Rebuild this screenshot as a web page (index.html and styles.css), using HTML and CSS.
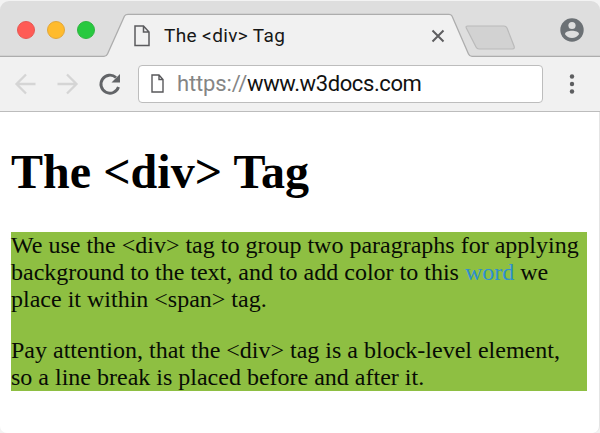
FILE: index.html
```html
<!DOCTYPE html>
<html lang="en">
<head>
<meta charset="utf-8">
<title>The &lt;div&gt; Tag</title>
<link rel="stylesheet" href="styles.css">
</head>
<body>
<div class="window">
  <header class="tabstrip">
    <svg class="tab-shape" width="600" height="57" viewBox="0 0 600 57">
      <path d="M-2 56.300H104Q106.500 56.300 107.500 54L124.500 16Q125.500 14.300 128 14.300H449Q451 14.300 452 16L468.500 54Q469.500 56.300 472 56.300H602V58H-2Z" fill="#f1f1f1" stroke="#adadad" stroke-width="1.300"/>
      <path d="M467.500 26H504Q506 26 507 28L514 46Q515 49 512.500 49H479Q477 49 476 47L466.300 28Q465.500 26 467.500 26Z" fill="#d2d2d2" stroke="#bababa" stroke-width="1.200"/>
    </svg>
    <div class="lights"><i class="light red"></i><i class="light yellow"></i><i class="light green"></i></div>
    <div class="tab">
      <svg width="16" height="22" viewBox="0 0 16 22" fill="none" stroke="#5b5b5e" stroke-width="1.500"><path d="M1 1H9.500L15 7V20.500H1ZM9.500 1V7H15"/></svg>
      <span class="tab-title">The &lt;div&gt; Tag</span>
      <svg class="close" width="14" height="14" viewBox="0 0 14 14" stroke="#5e5e60" stroke-width="2"><path d="M1.500 1.500L12.500 12.500M12.500 1.500L1.500 12.500"/></svg>
    </div>
    <svg class="user" width="24" height="24" viewBox="0 0 24 24"><circle cx="12" cy="12" r="11.700" fill="#6c7175"/><circle cx="12" cy="7.500" r="3.600" fill="#dedede"/><path d="M5 16.200C5 13.500 9 12.700 12 12.700S19 13.500 19 16.200C17.500 18.600 15 20 12 20S6.500 18.600 5 16.200Z" fill="#dedede"/></svg>
  </header>
  <nav class="toolbar">
    <svg class="nav-icons" width="108" height="26" viewBox="0 0 108 26" fill="none">
      <path d="M21.500 13H2.500M12 3.500L2.500 13L12 22.500M43.500 13H62.500M53 3.500L62.500 13L53 22.500" stroke="#d5d5d5" stroke-width="2.300"/>
      <path d="M104.500 16A9 9 0 1 1 102 6.500" stroke="#626467" stroke-width="2.900"/>
      <path d="M106 3V11.500H97.500Z" fill="#626467"/>
    </svg>
    <div class="address">
      <svg width="13" height="19" viewBox="0 0 13 19" fill="none" stroke="#58585b" stroke-width="1.400"><path d="M1 1H8L12 5.500V18H1ZM8 1V5.500H12"/></svg>
      <span class="url"><span class="scheme">https://</span><span class="host">www.w3docs.com</span></span>
    </div>
    <svg class="menu" width="6" height="22" viewBox="0 0 6 22" fill="#5d5e60"><circle cx="3" cy="3.500" r="2.200"/><circle cx="3" cy="11" r="2.200"/><circle cx="3" cy="18.500" r="2.200"/></svg>
  </nav>
  <main class="page">
    <h1>The &lt;div&gt; Tag</h1>
    <div class="box">
      <p>We use the &lt;div&gt; tag to group two paragraphs for applying<br>background to the text, and to add color to this <span class="word">word</span> we<br>place it within &lt;span&gt; tag.</p>
      <p>Pay attention, that the &lt;div&gt; tag is a block-level element,<br>so a line break is placed before and after it.</p>
    </div>
  </main>
</div>
</body>
</html>
```
FILE: styles.css
```css
* { box-sizing: border-box; }
body { margin: 0; background: #f3f3f3; overflow: hidden; }
.window { height: 433px; padding-top: 1px; }
.tabstrip { position: relative; display: flex; height: 56px; background: #dedede; border-radius: 9px 9px 0 0; }
.tab-shape { position: absolute; left: 0; top: -1px; }
.lights { position: relative; display: flex; gap: 12px; padding: 20px 0 0 16.500px; width: 134px; }
.light { width: 18px; height: 18px; border-radius: 50%; border: 1px solid; }
.red { background: #ff5b55; border-color: #e65853; }
.yellow { background: #ffbb2d; border-color: #e2a73b; }
.green { background: #27c93f; border-color: #2fb541; }
.tab { position: relative; display: flex; align-items: center; width: 311px; height: 44px; margin-top: 13px; }
.tab-title { margin-left: 14px; padding-bottom: 2px; font: 19px Roboto, sans-serif; letter-spacing: .38px; color: #171717; white-space: nowrap; }
.close { margin-left: auto; }
.user { position: relative; margin: 17px 0 0 115px; }
.toolbar { display: flex; align-items: center; height: 55px; padding: 0 0 1px 14px; background: #f1f1f1; border-bottom: 1px solid #bcbcbc; }
.address { display: flex; align-items: center; width: 405px; height: 38px; margin-left: 16px; padding-left: 12px; background: #fff; border: 1px solid #bdbdbd; border-radius: 4px; }
.url { margin-left: 13px; font: 22px Roboto, sans-serif; white-space: nowrap; }
.scheme { color: #858585; letter-spacing: -.15px; }
.host { color: #111; letter-spacing: -.4px; }
.menu { margin-left: 26px; }
.page { height: 321px; padding: 32px 12px 0 11px; background: #fff; border-radius: 0 0 7px 7px; border-right: 1px solid #e4e4e4; font-family: "Liberation Serif", serif; }
h1 { margin: 0 0 32px; font-size: 48px; line-height: 56px; letter-spacing: .05px; }
.box { height: 159px; background: #8ebf42; color: #080c04; font-size: 24px; line-height: 27px; white-space: nowrap; }
p { margin: 0 0 24px; }
.word { color: #2f8fd0; }
```
